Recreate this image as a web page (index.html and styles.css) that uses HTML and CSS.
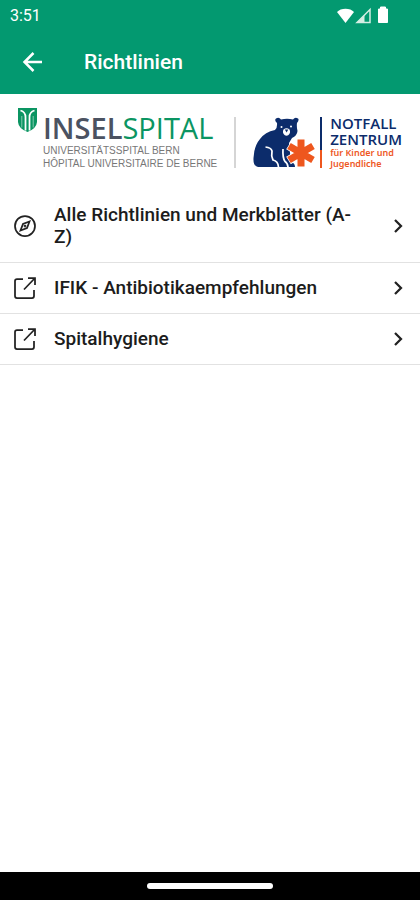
FILE: index.html
```
<!DOCTYPE html>
<html lang="de">
<head>
  <meta charset="UTF-8">
  <meta name="viewport" content="width=device-width, initial-scale=1">
  <title>Richtlinien</title>
  <link rel="stylesheet" href="styles.css">
</head>
<body>

  <header>
    <div class="status-bar">
      <span>3:51</span>
      <svg class="status-icons" viewBox="0 0 54 18" aria-hidden="true">
        <path d="M9.500 17L1 6C4.500 1.500 14.500 1.500 18 6Z" fill="#fff"/>
        <path d="M34 3.500V16.500H21Z" fill="none" stroke="#d4eee3" stroke-width="1.500"/>
        <path d="M28.500 9V16.500H21z" fill="#d4eee3"/>
        <path d="M42.500 3H44.500V1H49.500V3H51.500V16.500H42.500Z" fill="#fff" stroke="#fff" stroke-linejoin="round"/>
      </svg>
    </div>
    <div class="toolbar">
      <button class="back" type="button" aria-label="Zurück">
        <svg viewBox="0 0 24 24"><path d="M22 12H5M13.500 3L4.500 12L13.500 21"/></svg>
      </button>
      <h1>Richtlinien</h1>
    </div>
  </header>

  <main>
    <div class="logos">
      <div class="insel">
        <svg class="shield" viewBox="0 0 19 24" aria-hidden="true">
          <path d="M0 0H19V14Q18.500 20.500 9.500 24Q.5 20.500 0 14Z" fill="#0b9562"/>
          <path d="M2.500 2.500Q7.500 4 7.500 9V22.500M16.500 2.500Q11.500 4 11.500 9V22.500" fill="none" stroke="#fff" stroke-width="1.750"/>
          <path d="M3.800 8V19.500M15.200 8V19.500" fill="none" stroke="#fff" stroke-width=".5"/>
        </svg>
        <div>
          <div class="insel-name"><b>INSEL</b>SPITAL</div>
          <div class="insel-sub">UNIVERSITÄTSSPITAL BERN<br>HÔPITAL UNIVERSITAIRE DE BERNE</div>
        </div>
      </div>

      <div class="divider"></div>

      <div class="notfall">
        <svg class="bear" viewBox="0 0 64 52" aria-hidden="true">
          <path d="M25 7Q22 4 24 2.500Q27 .5 29 3.500Q35 2 41 3.500Q43 .5 46 2.500Q47.500 4 45 7Q44.500 11 45.500 15Q45 20 40 22L37 27L39 46Q43 47 43 51H6Q1 50 1.500 42Q2 30 8 23Q13 16 23 14Q25.500 12 25 7Z" fill="#0c2c6b"/>
          <path d="M13.500 31Q19 31.500 20 35Q19 40 21 44Q26 45 26.500 51M31 33Q30.500 42 33 45.500Q35.500 47 36 51" fill="none" stroke="#fff" stroke-width="1.750"/>
          <path d="M31.500 13.500Q34.500 11 37.500 13.500Q39 16.500 36.500 19Q34.500 20.500 32.500 19Q30 16.500 31.500 13.500Z" fill="#fff"/>
          <path d="M32.800 13.500h3.500l-1.700 3z" fill="#0c2c6b"/>
          <circle cx="29.500" cy="11" r="1" fill="#fff"/>
          <circle cx="39" cy="10.500" r="1" fill="#fff"/>
          <path d="M49 23V51M36.500 29.500L61.500 44.500M36.500 44.500L61.500 29.500" stroke="#fff" stroke-width="9"/>
          <path d="M49 23.500V50.500M37 30L61 44M37 44L61 30" stroke="#ee571e" stroke-width="7"/>
        </svg>
        <div class="divider divider-split"></div>
        <div>
          <div class="notfall-name">NOTFALL<br>ZENTRUM</div>
          <div class="notfall-sub">für Kinder und<br>Jugendliche</div>
        </div>
      </div>
    </div>

    <nav>
      <a class="row" href="#alle">
        <svg class="icon" viewBox="0 0 24 24" aria-hidden="true">
          <circle cx="12" cy="12" r="10"/>
          <path d="M16.500 7.500L14 14L7.500 16.500L10 10Z"/>
          <circle cx="12" cy="12" r=".5"/>
        </svg>
        <span>Alle Richtlinien und Merkblätter (A-<wbr>Z)</span>
        <svg class="chevron" viewBox="0 0 10 16" aria-hidden="true"><path d="M2 2L8 8L2 14"/></svg>
      </a>
      <a class="row" href="#ifik">
        <svg class="icon" viewBox="0 0 24 24" aria-hidden="true">
          <path d="M10 3H4Q2 3 2 5V20Q2 22 4 22H19Q21 22 21 20V14M15 2H22V9M22 2L11 13.500"/>
        </svg>
        <span>IFIK - Antibiotikaempfehlungen</span>
        <svg class="chevron" viewBox="0 0 10 16" aria-hidden="true"><path d="M2 2L8 8L2 14"/></svg>
      </a>
      <a class="row" href="#hygiene">
        <svg class="icon" viewBox="0 0 24 24" aria-hidden="true">
          <path d="M10 3H4Q2 3 2 5V20Q2 22 4 22H19Q21 22 21 20V14M15 2H22V9M22 2L11 13.500"/>
        </svg>
        <span>Spitalhygiene</span>
        <svg class="chevron" viewBox="0 0 10 16" aria-hidden="true"><path d="M2 2L8 8L2 14"/></svg>
      </a>
    </nav>
  </main>

  <footer>
    <div class="home-bar"></div>
  </footer>

</body>
</html>
```

FILE: styles.css
```
* {
  box-sizing: border-box;
}

body {
  margin: 0;
  min-height: 100vh;
  display: flex;
  flex-direction: column;
  background: #fff;
  color: #1c1c1c;
  font-family: Roboto, sans-serif;
}

header {
  background: #039970;
  color: #fff;
}

.status-bar {
  display: flex;
  justify-content: space-between;
  align-items: center;
  height: 30px;
  padding: 0 30px 0 10px;
  font-size: 16px;
}

.status-icons {
  width: 54px;
  height: 18px;
}

.toolbar {
  display: flex;
  align-items: center;
  gap: 40px;
  height: 64px;
  padding: 0 20px;
}

.back {
  width: 24px;
  height: 24px;
  padding: 0;
  border: none;
  background: none;
  cursor: pointer;
}

.back svg {
  display: block;
  fill: none;
  stroke: #fff;
  stroke-width: 2.5;
}

h1 {
  margin: 0;
  font-size: 21px;
  font-weight: 500;
}

main {
  flex: 1;
}

.logos {
  display: flex;
  justify-content: space-between;
  align-items: center;
  height: 96px;
  padding: 0 18px;
}

.insel {
  display: flex;
  gap: 6px;
  font-family: "Open Sans", sans-serif;
  white-space: nowrap;
}

.shield {
  width: 19px;
  height: 24px;
  margin-top: -6px;
}

.insel-name {
  margin-bottom: 2px;
  color: #0b9562;
  font-size: 29px;
  line-height: 28px;
}

.insel-name b {
  color: #4b5261;
  font-weight: 600;
}

.insel-sub {
  color: #777;
  font-family: "Liberation Sans", sans-serif;
  font-size: 10px;
  line-height: 13px;
}

.divider {
  width: 2px;
  height: 51px;
  background: #d5d5d5;
}

.divider-split {
  margin: 0 8px 0 4px;
  background: linear-gradient(#0c2c6b 65%, #ee571e 65%);
}

.notfall {
  display: flex;
  align-items: center;
  white-space: nowrap;
}

.bear {
  width: 64px;
  height: 52px;
}

.notfall-name {
  color: #0c2c6b;
  font-family: "Open Sans", sans-serif;
  font-size: 15px;
  font-weight: 600;
  line-height: 16px;
}

.notfall-sub {
  color: #ee571e;
  font-family: "Noto Sans", sans-serif;
  font-size: 9px;
  font-weight: 600;
  line-height: 11px;
}

.row {
  display: flex;
  align-items: center;
  padding: 14px 17px 14px 13px;
  border-bottom: 1px solid #e2e2e2;
  color: inherit;
  font-size: 19px;
  font-weight: 500;
  line-height: 22px;
  text-decoration: none;
}

.row span {
  flex: 1;
  padding: 0 36px 0 17px;
}

.icon {
  flex: none;
  width: 24px;
  height: 24px;
  margin: -1px 0;
  fill: none;
  stroke: #222;
  stroke-width: 1.75;
}

.chevron {
  flex: none;
  width: 10px;
  height: 16px;
  fill: none;
  stroke: #222;
  stroke-width: 2.25;
}

footer {
  display: flex;
  justify-content: center;
  align-items: center;
  height: 28px;
  background: #000;
}

.home-bar {
  width: 30%;
  height: 6px;
  border-radius: 3px;
  background: #fff;
}
```
